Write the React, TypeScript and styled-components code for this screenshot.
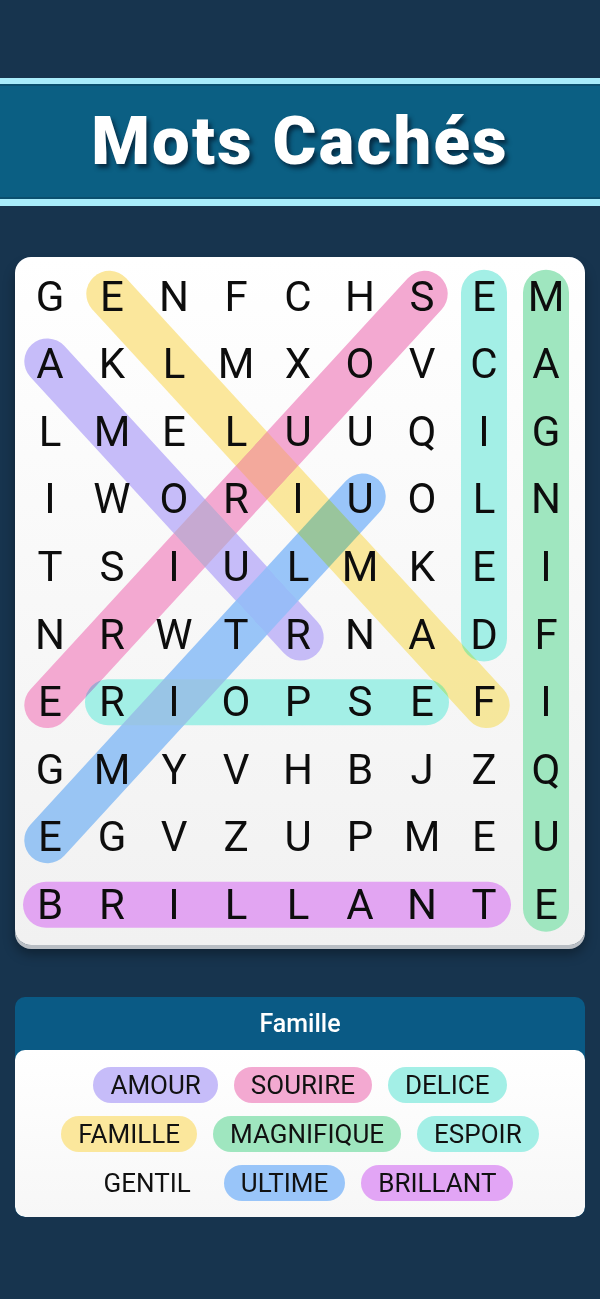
import styled, { createGlobalStyle } from "styled-components";

const GlobalStyle = createGlobalStyle`
  html, body {
    margin: 0;
    padding: 0;
    background: #17344e;
  }
  body {
    font-family: Roboto, "Liberation Sans", sans-serif;
  }
`;

const COL_W = 62;
const ROW_H = 67.56;
const COLS = 9;
const ROWS = 10;

const rows = [
  "GENFCHSEM",
  "AKLMXOVCA",
  "LMELUUQIG",
  "IWORIUOLN",
  "TSIULMKEI",
  "NRWTRNADF",
  "ERIOPSEFI",
  "GMYVHBJZQ",
  "EGVZUPMEU",
  "BRILLANTE",
];

interface IWord {
  name: string;
  color: string;
  from?: [number, number]; // [col, row]
  to?: [number, number];
}

const words: IWord[] = [
  { name: "AMOUR", color: "#c6bcf9", from: [0, 1], to: [4, 5] },
  { name: "SOURIRE", color: "#f3a9d1", from: [6, 0], to: [0, 6] },
  { name: "DELICE", color: "#a3efe6", from: [7, 5], to: [7, 0] },
  { name: "FAMILLE", color: "#fbe79c", from: [7, 6], to: [1, 0] },
  { name: "MAGNIFIQUE", color: "#9fe6bf", from: [8, 0], to: [8, 9] },
  { name: "ESPOIR", color: "#a3efe6", from: [6, 6], to: [1, 6] },
  { name: "GENTIL", color: "transparent" },
  { name: "ULTIME", color: "#99c5f9", from: [5, 3], to: [0, 8] },
  { name: "BRILLANT", color: "#e2a5f5", from: [0, 9], to: [7, 9] },
];

const Page = styled.div`
  width: 600px;
  min-height: 1299px;
  display: flex;
  flex-direction: column;
  padding-top: 78px;
  box-sizing: border-box;
`;

const Banner = styled.header`
  height: 115px;
  background: #0b5f83;
  border-top: 6px solid #a8ecfb;
  border-bottom: 7px solid #a8ecfb;
  box-shadow: inset 0 2px 0 #0a4f6e, inset 0 -2px 0 #0a4f6e;
  display: flex;
  align-items: center;
  justify-content: center;
`;

const Title = styled.h1`
  margin: 0;
  color: #ffffff;
  font-family: Roboto, "Liberation Sans", sans-serif;
  font-weight: 900;
  font-size: 67px;
  line-height: 67px;
  letter-spacing: 2.2px;
  text-shadow: 3px 4px 4px rgba(4, 28, 48, 0.75);
`;

const Board = styled.section`
  margin: 51px 15px 0;
  padding: 6px 4px 7px;
  border-radius: 16px;
  background: linear-gradient(#ffffff, #f1f1f1);
  box-shadow: 0 4px 0 #b9bec4, 0 9px 12px rgba(0, 0, 0, 0.35);
`;

const Grid = styled.div`
  position: relative;
  display: grid;
  grid-template-columns: repeat(${COLS}, ${COL_W}px);
  grid-template-rows: repeat(${ROWS}, ${ROW_H}px);
`;

const Strokes = styled.svg`
  position: absolute;
  inset: 0;
  pointer-events: none;

  & line {
    mix-blend-mode: darken;
  }
`;

const Cell = styled.span`
  position: relative;
  display: flex;
  align-items: center;
  justify-content: center;
  font-size: 42px;
  line-height: 1;
  color: #0d0d0d;
`;

const WordPanel = styled.section`
  margin: 52px 15px 0;
  border-radius: 10px;
  background: #0a5a85;
  overflow: hidden;
`;

const PanelTitle = styled.h2`
  margin: 0;
  height: 53px;
  display: flex;
  align-items: center;
  justify-content: center;
  color: #ffffff;
  font-size: 25px;
  font-weight: 500;
`;

const ChipList = styled.div`
  display: flex;
  flex-wrap: wrap;
  justify-content: center;
  gap: 13px 16px;
  padding: 17px 24px 16px;
  border-radius: 10px;
  background: linear-gradient(#ffffff, #f7f7f7);
`;

const Chip = styled.span<{ $bg: string }>`
  height: 36px;
  padding: 0 17px;
  display: flex;
  align-items: center;
  border-radius: 18px;
  background: ${(props) => props.$bg};
  color: #111111;
  font-size: 26px;
`;

const center = (c: number, r: number) => ({
  x: COL_W / 2 + c * COL_W,
  y: ROW_H / 2 + r * ROW_H,
});

function Highlight({ word }: { word: IWord }) {
  if (!word.from || !word.to) return null;
  const a = center(word.from[0], word.from[1]);
  const b = center(word.to[0], word.to[1]);
  const len = Math.hypot(b.x - a.x, b.y - a.y);
  const ux = (b.x - a.x) / len;
  const uy = (b.y - a.y) / len;
  const ext = 4;
  return (
    <line
      x1={a.x - ux * ext}
      y1={a.y - uy * ext}
      x2={b.x + ux * ext}
      y2={b.y + uy * ext}
      stroke={word.color}
      strokeWidth={46}
      strokeLinecap="round"
    />
  );
}

export default function App() {
  return (
    <>
      <GlobalStyle />
      <Page>
        <Banner>
          <Title>Mots Cachés</Title>
        </Banner>

        <Board>
          <Grid>
            <Strokes width={COLS * COL_W} height={ROWS * ROW_H}>
              {words.map((w) => (
                <Highlight key={w.name} word={w} />
              ))}
            </Strokes>
            {rows.map((row, r) =>
              row.split("").map((letter, c) => <Cell key={`${r}-${c}`}>{letter}</Cell>)
            )}
          </Grid>
        </Board>

        <WordPanel>
          <PanelTitle>Famille</PanelTitle>
          <ChipList>
            {words.map((w) => (
              <Chip key={w.name} $bg={w.color}>
                {w.name}
              </Chip>
            ))}
          </ChipList>
        </WordPanel>
      </Page>
    </>
  );
}
